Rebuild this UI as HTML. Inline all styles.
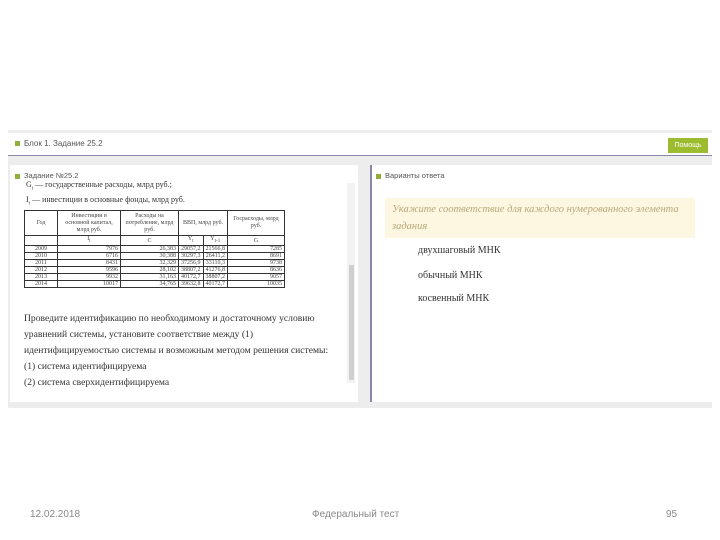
<!DOCTYPE html>
<html><head><meta charset="utf-8"><style>
body{margin:0;width:720px;height:540px;background:#fff;position:relative;overflow:hidden;font-family:"Liberation Sans",sans-serif}
.a{position:absolute}
.sq{display:inline-block;width:5px;height:5px;background:#8fae3a;margin-right:4px;vertical-align:middle}
.ser{font-family:"Liberation Serif",serif;color:#333}
table{border-collapse:collapse;font-family:"Liberation Serif",serif;font-size:6px;color:#444}
td{border:1px solid #333;padding:0 2px;height:6px;text-align:right;line-height:6px}
th{border:1px solid #333;font-weight:normal;font-size:6px;line-height:7px}
</style></head><body>
<div class="a" style="left:8px;top:130px;width:704px;height:278px;background:#ededed"></div>
<div class="a" style="left:8px;top:133px;width:704px;height:22px;background:#fff;border-bottom:1px solid #8a88a8"></div>
<div class="a" style="left:15px;top:139px;font-size:8px;color:#555"><span class="sq"></span>Блок 1. Задание 25.2</div>
<div class="a" style="left:668px;top:138px;width:40px;height:15px;background:#9dbb2e;color:#fff;font-size:7px;line-height:15px;text-align:center">Помощь</div>
<div class="a" style="left:10px;top:165px;width:348px;height:237px;background:#fff"></div>
<div class="a" style="left:347px;top:183px;width:8px;height:200px;background:#f2f2f2"></div>
<div class="a" style="left:349px;top:265px;width:5px;height:115px;background:#cfcfcf"></div>
<div class="a" style="left:15px;top:171px;font-size:7.5px;color:#555"><span class="sq"></span>Задание №25.2</div>
<div class="a ser" style="left:26px;top:180px;font-size:8px">G<sub style="font-size:5px">t</sub> — государственные расходы, млрд руб.;</div>
<div class="a ser" style="left:26px;top:195px;font-size:8px">I<sub style="font-size:5px">t</sub> — инвестиции в основные фонды, млрд руб.</div>
<table class="a" style="left:24px;top:210px;width:261px">
<tr><th rowspan=2 style="width:30px;height:22px">Год</th><th rowspan=2 style="width:60px">Инвестиции в основной капитал, млрд руб.</th><th rowspan=2 style="width:55px">Расходы на потребление, млрд руб.</th><th colspan=2>ВВП, млрд руб.</th><th rowspan=2>Госрасходы, млрд руб.</th></tr>
<tr></tr>
<tr><td style="text-align:center"></td><td style="text-align:center">I<sub>t</sub></td><td style="text-align:center">C</td><td style="text-align:center">Y<sub>t</sub></td><td style="text-align:center">Y<sub>t-1</sub></td><td style="text-align:center">G</td></tr>
<tr><td style="text-align:center">2009</td><td>7976</td><td>26,383</td><td>29057,2</td><td>21566,8</td><td>7285</td></tr>
<tr><td style="text-align:center">2010</td><td>6716</td><td>30,388</td><td>30297,3</td><td>26411,2</td><td>8691</td></tr>
<tr><td style="text-align:center">2011</td><td>8431</td><td>32,329</td><td>37256,9</td><td>33110,3</td><td>9738</td></tr>
<tr><td style="text-align:center">2012</td><td>9596</td><td>28,102</td><td>38807,2</td><td>41276,8</td><td>8636</td></tr>
<tr><td style="text-align:center">2013</td><td>9932</td><td>31,163</td><td>40172,7</td><td>38807,2</td><td>9057</td></tr>
<tr><td style="text-align:center">2014</td><td>10017</td><td>34,765</td><td>39632,8</td><td>40172,7</td><td>10035</td></tr>
</table>
<div class="a ser" style="left:24px;top:311px;font-size:9.6px;line-height:16px;white-space:nowrap">Проведите идентификацию по необходимому и достаточному условию<br>уравнений системы, установите соответствие между (1)<br>идентифицируемостью системы и возможным методом решения системы:<br>(1) система идентифицируема<br>(2) система сверхидентифицируема</div>
<div class="a" style="left:370px;top:165px;width:342px;height:237px;background:#fff;border-left:2px solid #8a88a8"></div>
<div class="a" style="left:376px;top:171px;font-size:7.5px;color:#555"><span class="sq"></span>Варианты ответа</div>
<div class="a ser" style="left:385px;top:198px;width:310px;height:40px;background:#fdf6e0;font-style:italic;font-size:10.5px;color:#b8a878;line-height:17px;padding:3px 7px;box-sizing:border-box">Укажите соответствие для каждого нумерованного элемента задания</div>
<div class="a ser" style="left:418px;top:245px;font-size:10px">двухшаговый МНК</div>
<div class="a ser" style="left:418px;top:270px;font-size:10px">обычный МНК</div>
<div class="a ser" style="left:418px;top:293px;font-size:10px">косвенный МНК</div>
<div class="a" style="left:30px;top:509px;font-size:10px;color:#888">12.02.2018</div>
<div class="a" style="left:312px;top:509px;font-size:10px;color:#888">Федеральный тест</div>
<div class="a" style="left:666px;top:509px;font-size:10px;color:#888">95</div>
</body></html>
